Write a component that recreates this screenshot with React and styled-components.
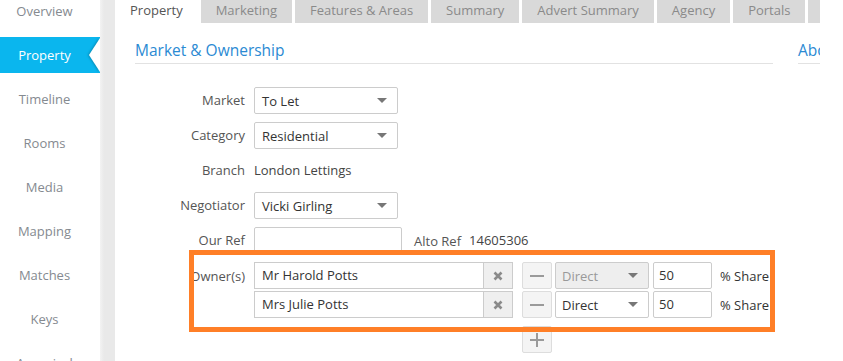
import styled, { createGlobalStyle } from "styled-components";

const GlobalStyle = createGlobalStyle`
  body {
    margin: 0;
    background: #fff;
    font-family: "Open Sans", "Noto Sans", sans-serif;
    font-size: 13px;
    color: #333;
  }
`;

const sideItems = [
  "Overview",
  "Property",
  "Timeline",
  "Rooms",
  "Media",
  "Mapping",
  "Matches",
  "Keys",
  "Appraisal",
];

const tabs = [
  "Property",
  "Marketing",
  "Features & Areas",
  "Summary",
  "Advert Summary",
  "Agency",
  "Portals",
  "Docs",
];

const owners = [
  { name: "Mr Harold Potts", type: "Direct", share: "50", locked: true },
  { name: "Mrs Julie Potts", type: "Direct", share: "50", locked: false },
];

function Caret() {
  return (
    <svg width="10" height="5" viewBox="0 0 10 5">
      <path d="M0 0 L10 0 L5 5 Z" fill="#777" />
    </svg>
  );
}

function Cross() {
  return (
    <svg width="10" height="10" viewBox="0 0 10 10">
      <path
        d="M1.5 1.5 L8.5 8.5 M8.5 1.5 L1.5 8.5"
        stroke="#8a8a8a"
        strokeWidth="2.6"
      />
    </svg>
  );
}

function Minus() {
  return (
    <svg width="14" height="14" viewBox="0 0 14 14">
      <path d="M0 7 H14" stroke="#9a9a9a" strokeWidth="2" />
    </svg>
  );
}

function Plus() {
  return (
    <svg width="14" height="14" viewBox="0 0 14 14">
      <path d="M0 7 H14 M7 0 V14" stroke="#9a9a9a" strokeWidth="2" />
    </svg>
  );
}

function App() {
  return (
    <Page>
      <GlobalStyle />
      <Sidebar>
        <SideList>
          {sideItems.map((item) => (
            <SideItem key={item} $active={item === "Property"}>
              {item}
            </SideItem>
          ))}
        </SideList>
      </Sidebar>
      <Gutter />
      <Main>
        <TabBar>
          {tabs.map((tab) => (
            <Tab key={tab} $active={tab === "Property"}>
              {tab}
            </Tab>
          ))}
        </TabBar>
        <Body>
          <LeftCol>
            <SectionTitle>Market &amp; Ownership</SectionTitle>
            <Form>
              <Label>Market</Label>
              <Select>
                <span>To Let</span>
                <Caret />
              </Select>

              <Label>Category</Label>
              <Select>
                <span>Residential</span>
                <Caret />
              </Select>

              <Label>Branch</Label>
              <Value>London Lettings</Value>

              <Label>Negotiator</Label>
              <Select>
                <span>Vicki Girling</span>
                <Caret />
              </Select>

              <Label>Our Ref</Label>
              <Inline>
                <TextInput $width={148} />
                <RefLabel>Alto Ref</RefLabel>
                <Value>14605306</Value>
              </Inline>

              <Label $top>Owner(s)</Label>
              <Owners>
                {owners.map((o) => (
                  <OwnerRow key={o.name}>
                    <NameGroup>
                      <NameInput>{o.name}</NameInput>
                      <RemoveBtn>
                        <Cross />
                      </RemoveBtn>
                    </NameGroup>
                    <SquareBtn>
                      <Minus />
                    </SquareBtn>
                    <ShareSelect $disabled={o.locked}>
                      <span>{o.type}</span>
                      <Caret />
                    </ShareSelect>
                    <ShareInput>{o.share}</ShareInput>
                    <ShareText>% Share</ShareText>
                  </OwnerRow>
                ))}
                <AddRow>
                  <SquareBtn>
                    <Plus />
                  </SquareBtn>
                </AddRow>
              </Owners>

              <Highlight />
            </Form>
          </LeftCol>
          <RightCol>
            <SectionTitle>About</SectionTitle>
          </RightCol>
        </Body>
      </Main>
    </Page>
  );
}

const Page = styled.div`
  display: flex;
  width: 843px;
  height: 361px;
  overflow: hidden;
  background: #fff;
`;

const Sidebar = styled.nav`
  width: 100px;
  flex-shrink: 0;
  background: #fff;
  overflow: hidden;
`;

const SideList = styled.ul`
  list-style: none;
  margin: -11px 0 0;
  padding: 0;
  display: flex;
  flex-direction: column;
`;

const SideItem = styled.li`
  position: relative;
  flex-shrink: 0;
  height: 36px;
  margin: 4px 0;
  display: flex;
  align-items: center;
  justify-content: center;
  padding-right: 11px;
  color: ${(p) => (p.$active ? "#fff" : "#858a90")};
  background: ${(p) => (p.$active ? "#0ab6ee" : "transparent")};

  &::after {
    content: "";
    display: ${(p) => (p.$active ? "block" : "none")};
    position: absolute;
    right: 0;
    top: 1px;
    border-style: solid;
    border-width: 17px 11px 17px 0;
    border-color: transparent #fff transparent transparent;
    filter: drop-shadow(-1px 0 1px rgba(0, 0, 0, 0.25));
  }
`;

const Gutter = styled.div`
  width: 15px;
  flex-shrink: 0;
  background: linear-gradient(to right, #f3f3f3, #e9e9e9 4px);
`;

const Main = styled.main`
  width: 705px;
  flex-shrink: 0;
  overflow: hidden;
  display: flex;
  flex-direction: column;
`;

const TabBar = styled.div`
  display: flex;
  gap: 3px;
  height: 23px;
  flex-shrink: 0;
`;

const Tab = styled.div`
  flex-shrink: 0;
  padding: 0 15px;
  line-height: 20px;
  white-space: nowrap;
  color: ${(p) => (p.$active ? "#555" : "#8a8a8a")};
  background: ${(p) => (p.$active ? "#fff" : "#d9d9d9")};
`;

const Body = styled.div`
  display: flex;
  gap: 25px;
  padding-left: 20px;
`;

const LeftCol = styled.section`
  width: 638px;
  flex-shrink: 0;
`;

const RightCol = styled.section`
  width: 300px;
  flex-shrink: 0;
`;

const SectionTitle = styled.h2`
  margin: 16px 0 0;
  padding-bottom: 2px;
  font-size: 15.5px;
  font-weight: 400;
  line-height: 22px;
  color: #2b8ad3;
  border-bottom: 1px solid #e2e2e2;
  white-space: nowrap;
`;

const Form = styled.div`
  position: relative;
  margin-top: 23px;
  display: grid;
  grid-template-columns: 110px 1fr;
  column-gap: 9px;
  row-gap: 8px;
  grid-auto-rows: minmax(27px, auto);
`;

const Label = styled.div`
  text-align: right;
  color: #555;
  line-height: 27px;
  align-self: ${(p) => (p.$top ? "start" : "center")};
  padding-top: ${(p) => (p.$top ? "1px" : "0")};
`;

const Value = styled.div`
  color: #444;
  line-height: 27px;
`;

const Select = styled.div`
  box-sizing: border-box;
  width: 144px;
  height: 27px;
  border: 1px solid #ccc;
  border-radius: 2px;
  padding: 0 10px 0 7px;
  display: flex;
  align-items: center;
  justify-content: space-between;
  color: #333;
`;

const Inline = styled.div`
  display: flex;
  align-items: center;
`;

const TextInput = styled.div`
  box-sizing: border-box;
  width: ${(p) => p.$width}px;
  height: 27px;
  border: 1px solid #ccc;
  border-radius: 2px;
`;

const RefLabel = styled.span`
  color: #555;
  margin: 0 8px 0 12px;
`;

const Owners = styled.div`
  display: flex;
  flex-direction: column;
  gap: 2px;
`;

const OwnerRow = styled.div`
  display: flex;
  align-items: center;
  height: 27px;
`;

const NameGroup = styled.div`
  display: flex;
  width: 259px;
  height: 27px;
  margin-right: 9px;
`;

const NameInput = styled.div`
  box-sizing: border-box;
  flex: 1;
  height: 27px;
  border: 1px solid #ccc;
  border-right: none;
  padding-left: 7px;
  line-height: 25px;
  color: #333;
`;

const RemoveBtn = styled.div`
  box-sizing: border-box;
  width: 30px;
  height: 27px;
  border: 1px solid #ccc;
  background: #efefef;
  display: flex;
  align-items: center;
  justify-content: center;
`;

const SquareBtn = styled.div`
  box-sizing: border-box;
  width: 30px;
  height: 27px;
  border: 1px solid #ddd;
  border-radius: 2px;
  background: #f4f4f4;
  display: flex;
  align-items: center;
  justify-content: center;
`;

const ShareSelect = styled(Select)`
  width: 94px;
  margin-left: 3px;
  padding: 0 10px 0 6px;
  background: ${(p) => (p.$disabled ? "#eeeeee" : "#fff")};
  color: ${(p) => (p.$disabled ? "#999" : "#333")};
`;

const ShareInput = styled.div`
  box-sizing: border-box;
  width: 59px;
  height: 27px;
  margin-left: 4px;
  border: 1px solid #ccc;
  border-radius: 2px;
  padding-left: 5px;
  line-height: 25px;
  color: #333;
`;

const ShareText = styled.span`
  margin-left: 8px;
  white-space: nowrap;
  color: #333;
`;

const AddRow = styled.div`
  display: flex;
  margin-top: 6px;
  padding-left: 268px;
`;

const Highlight = styled.div`
  position: absolute;
  left: 54px;
  top: 163px;
  width: 586px;
  height: 82px;
  box-sizing: border-box;
  border: 5px solid #ff7f27;
  pointer-events: none;
`;

export default App;
